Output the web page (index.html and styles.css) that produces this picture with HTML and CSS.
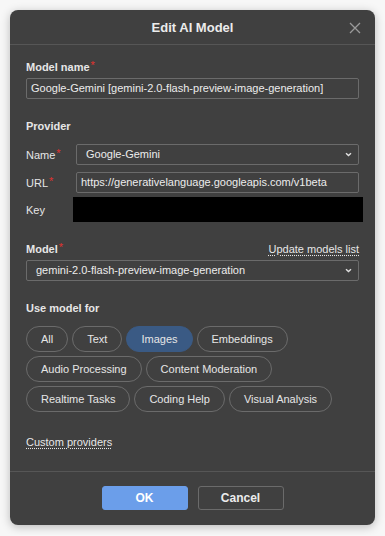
FILE: index.html
```html
<!DOCTYPE html>
<html lang="en">
<head>
  <meta charset="UTF-8" />
  <meta name="viewport" content="width=device-width, initial-scale=1.0"/>
  <title>Edit AI Model</title>
  <link rel="stylesheet" href="styles.css">
</head>
<body>
  <div class="dialog">
    <!-- Header -->
    <div class="dlg-head">
      <span class="dlg-title">Edit AI Model</span>
      <svg class="close" width="12" height="12" viewBox="0 0 12 12"><path d="M1 1L11 11M11 1L1 11" stroke="#9a9a9a" stroke-width="1.3" fill="none"/></svg>
    </div>

    <div class="dlg-body">
      <div class="lbl">Model name<span class="req">*</span></div>
      <div class="inp">Google-Gemini [gemini-2.0-flash-preview-image-generation]</div>

      <div class="lbl section">Provider</div>
      <div class="row first">
        <span class="row-lbl">Name<span class="req">*</span></span>
        <div class="sel">Google-Gemini <svg width="7" height="5" viewBox="0 0 7 5"><path d="M1 1.2L3.5 3.6L6 1.2" stroke="#e0e0e0" stroke-width="1.4" fill="none"/></svg></div>
      </div>
      <div class="row">
        <span class="row-lbl">URL<span class="req">*</span></span>
        <div class="inp">https://generativelanguage.googleapis.com/v1beta</div>
      </div>
      <div class="row key">
        <span class="row-lbl">Key</span>
        <div class="redacted"></div>
      </div>

      <div class="lbl section split">
        <span>Model<span class="req">*</span></span>
        <a class="link">Update models list</a>
      </div>
      <div class="sel wide">gemini-2.0-flash-preview-image-generation <svg width="7" height="5" viewBox="0 0 7 5"><path d="M1 1.2L3.5 3.6L6 1.2" stroke="#e0e0e0" stroke-width="1.4" fill="none"/></svg></div>

      <div class="lbl section">Use model for</div>
      <div class="chips">
        <span class="chip">All</span>
        <span class="chip">Text</span>
        <span class="chip on">Images</span>
        <span class="chip">Embeddings</span>
        <span class="chip">Audio Processing</span>
        <span class="chip">Content Moderation</span>
        <span class="chip">Realtime Tasks</span>
        <span class="chip">Coding Help</span>
        <span class="chip">Visual Analysis</span>
      </div>

      <a class="link custom">Custom providers</a>
    </div>

    <div class="dlg-foot">
      <button class="btn ok">OK</button>
      <button class="btn">Cancel</button>
    </div>
  </div>
</body>
</html>
```

FILE: styles.css
```css
body { margin: 0; padding: 10px; background: #f7f7f7; font-family: "Liberation Sans", Arial, sans-serif; color: #e6e6e6; }
.dialog { width: 365px; background: #404040; border-radius: 8px; box-shadow: 0 2px 10px rgba(0,0,0,0.25); overflow: hidden; }
.dlg-head { height: 34px; border-bottom: 1px solid #565656; display: flex; align-items: center; justify-content: center; position: relative; }
.dlg-title { font-size: 13px; font-weight: bold; color: #ececec; }
.close { position: absolute; right: 14px; top: 12px; }
.dlg-body { padding: 15px 16px 21px; }
.lbl { font-size: 11px; font-weight: bold; line-height: 14px; margin-bottom: 4px; }
.lbl.section { margin-top: 20px; }
.req { color: #e0322f; font-weight: normal; position: relative; top: -2px; margin-left: 1px; }
.inp, .sel { height: 21px; box-sizing: border-box; border: 1px solid #6b6b6b; border-radius: 2px; font-size: 11px; line-height: 19px; padding: 0 4px; white-space: nowrap; overflow: hidden; flex: 1; color: #ececec; }
.sel { display: flex; align-items: center; justify-content: space-between; padding: 0 6px 0 9px; }
.sel.wide { margin-top: 4px; }
.row { display: flex; align-items: center; margin-top: 7px; }
.row.first { margin-top: 11px; }
.row.key { margin-top: 4px; }
.row-lbl { width: 50px; font-size: 11px; flex: none; }
.row.key .row-lbl { width: 47px; }
.redacted { height: 25px; flex: 1; background: #000; margin-right: -4px; }
.split { display: flex; justify-content: space-between; margin-top: 18px; margin-bottom: 4px; }
.link { font-size: 11px; font-weight: normal; color: #e6e6e6; text-decoration: underline dotted; text-underline-offset: 2px; }
.chips { display: flex; flex-wrap: wrap; gap: 4px; margin-top: 11px; padding-right: 20px; }
.chip { height: 26px; box-sizing: border-box; border: 1px solid #6b6b6b; border-radius: 13px; padding: 0 14px; font-size: 11px; line-height: 24px; color: #e6e6e6; }
.chip.on { background: #3a5a84; border-color: #3a5a84; }
.custom { display: inline-block; margin-top: 24px; }
.dlg-foot { border-top: 1px solid #565656; padding: 14px 0 15px; display: flex; justify-content: center; gap: 10px; }
.btn { width: 86px; height: 24px; border: 1px solid #6b6b6b; border-radius: 3px; background: transparent; color: #ececec; font-family: "Liberation Sans", Arial, sans-serif; font-size: 12px; font-weight: bold; }
.btn.ok { background: #6b9eea; border-color: #6b9eea; color: #fff; }
```
